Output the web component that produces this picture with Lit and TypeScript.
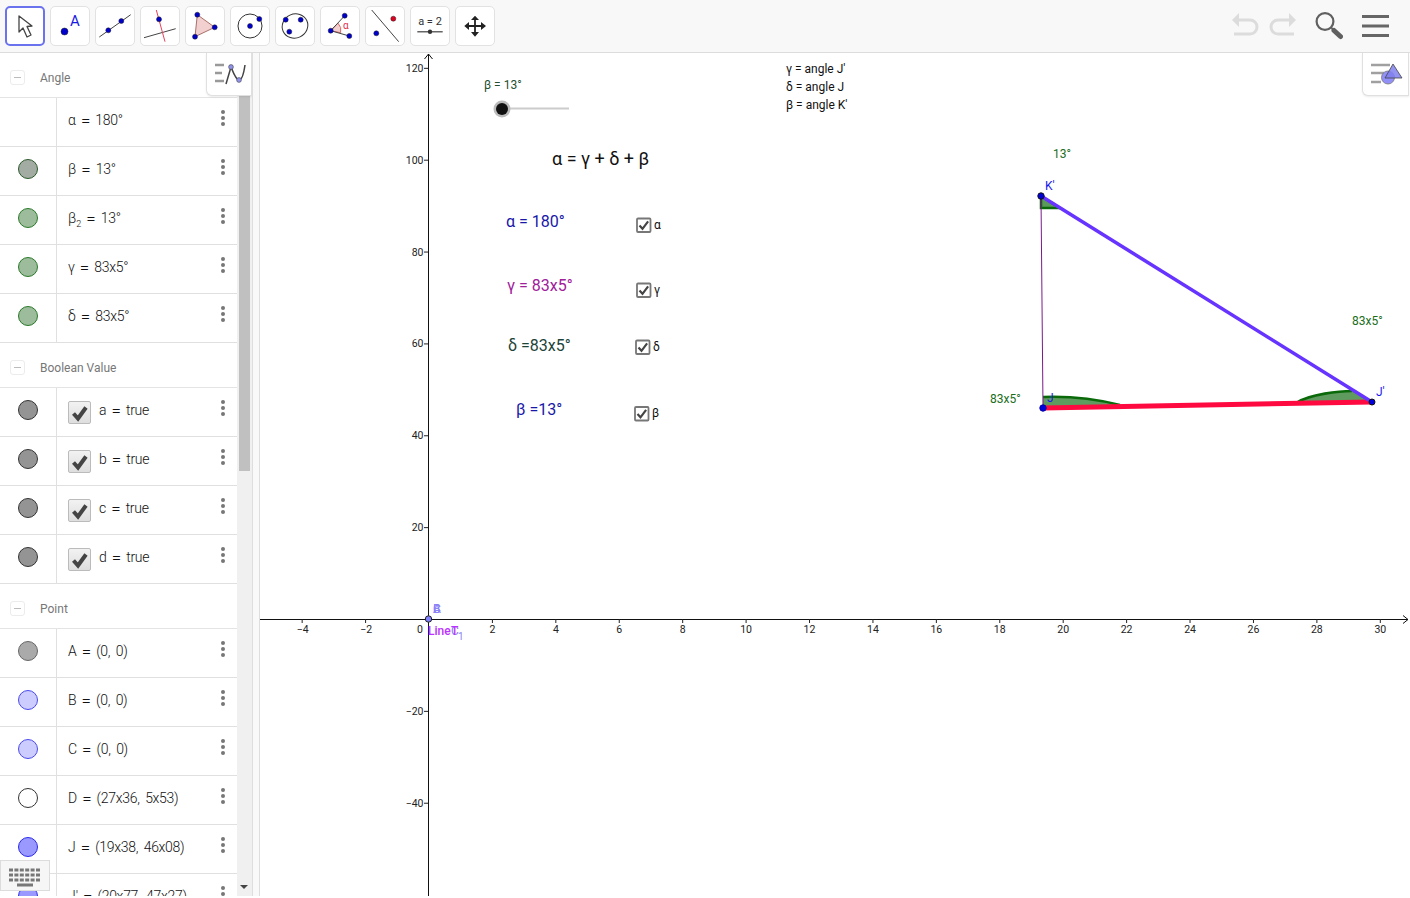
import { LitElement, html, css, svg } from "lit";
import { customElement } from "lit/decorators.js";

type Row = { name: unknown; value: string; marble?: string; check?: boolean };
type Group = { title: string; rows: Row[] };

const GROUPS: Group[] = [
  {
    title: "Angle",
    rows: [
      { name: "α", value: "180°" },
      { name: "β", value: "13°", marble: "m-olive" },
      { name: html`β<sub>2</sub>`, value: "13°", marble: "m-green" },
      { name: "γ", value: "83x5°", marble: "m-green" },
      { name: "δ", value: "83x5°", marble: "m-green" },
    ],
  },
  {
    title: "Boolean Value",
    rows: [
      { name: "a", value: "true", marble: "m-gray", check: true },
      { name: "b", value: "true", marble: "m-gray", check: true },
      { name: "c", value: "true", marble: "m-gray", check: true },
      { name: "d", value: "true", marble: "m-gray", check: true },
    ],
  },
  {
    title: "Point",
    rows: [
      { name: "A", value: "(0, 0)", marble: "m-silver" },
      { name: "B", value: "(0, 0)", marble: "m-pale" },
      { name: "C", value: "(0, 0)", marble: "m-pale" },
      { name: "D", value: "(27x36, 5x53)", marble: "m-white" },
      { name: "J", value: "(19x38, 46x08)", marble: "m-blue" },
      { name: "J'", value: "(20x77, 47x27)", marble: "m-blue" },
    ],
  },
];

const pt = (x: number, y: number, r = 2.5, c = "#0000cc") =>
  svg`<circle cx=${x} cy=${y} r=${r} fill=${c} stroke="#222" stroke-width="0.5"></circle>`;

const TOOL_ICONS = [
  svg`<path d="M14 10V26L18 22L22 31L26 29L22 20.5L27 20Z" fill="#fff" stroke="#444" stroke-width="1.3" stroke-linejoin="round"></path>`,
  svg`${pt(14.5, 25.5, 3.5)}<text class="ti-a" x="20" y="20">A</text>`,
  svg`<line x1="4.3" y1="31" x2="35.7" y2="8.7" stroke="#444"></line>${pt(13.3, 24.3)}${pt(26.3, 15)}`,
  svg`<line x1="4" y1="31.7" x2="35.7" y2="22.7" stroke="#444"></line><line x1="16.3" y1="4" x2="25" y2="35.7" stroke="#e8405a"></line>${pt(19, 13.3)}`,
  svg`<path d="M12.3 8.7L29.7 21.3L10 30.7Z" fill="#f2d0d0" stroke="#a8706a" stroke-width="1"></path>${pt(12.3, 8.7)}${pt(29.7, 21.3)}${pt(10, 30.7)}`,
  svg`<circle cx="20" cy="20" r="12" fill="none" stroke="#333"></circle>${pt(20, 20)}${pt(29.3, 13)}`,
  svg`<ellipse cx="20" cy="20" rx="13" ry="12" transform="rotate(-25 20 20)" fill="none" stroke="#333"></ellipse>${pt(10.7, 13.7)}${pt(25.7, 13.7)}${pt(14.3, 25.7)}`,
  svg`<path d="M10.7 24.7L18 17.2A10 10 0 0 1 20.6 26.7Z" fill="#f2d0d0" stroke="#d66"></path><line x1="10.7" y1="24.7" x2="24.7" y2="9.7" stroke="#444"></line><line x1="10.7" y1="24.7" x2="29.3" y2="30" stroke="#444"></line>${pt(10.7, 24.7)}${pt(24.7, 9.7)}${pt(29.3, 30)}<text class="ti-alpha" x="23" y="23">α</text>`,
  svg`<line x1="6.7" y1="4" x2="33.7" y2="35.7" stroke="#444"></line>${pt(28.3, 12.7, 2.5, "#e00020")}${pt(11.3, 27.3)}`,
  svg`<text class="ti-eq" x="20" y="19" text-anchor="middle">a = 2</text><line x1="7.3" y1="25.7" x2="32.7" y2="25.7" stroke="#666" stroke-width="1.4"></line><circle cx="20" cy="25.7" r="2.2" fill="#333"></circle>`,
  svg`<path d="M20 12V28M12 20H28" stroke="#222" stroke-width="1.8"></path><path d="M20 9.7L16 14H24ZM20 30.7L16 26H24ZM9.3 20L14 16V24ZM31 20L26 16V24Z" fill="#222"></path>`,
];

const CHECK_PATH = "M3 7.5L6 10.8L11.6 3.4";

@customElement("app-root")
export class AppRoot extends LitElement {
  static styles = css`
    :host {
      display: block;
      width: 1410px;
      height: 896px;
      overflow: hidden;
      background: #fff;
      font-family: Roboto, "Liberation Sans", sans-serif;
      color: #222;
    }
    .toolbar {
      display: flex;
      align-items: center;
      box-sizing: border-box;
      height: 53px;
      padding: 0 20px 1px 5px;
      gap: 5px;
      background: #f8f8f8;
      border-bottom: 1px solid #dcdcdc;
    }
    .tool {
      box-sizing: border-box;
      width: 40px;
      height: 40px;
      background: #fff;
      border: 1px solid #e2e2e2;
      border-radius: 5px;
      overflow: hidden;
    }
    .tool.active {
      border: 2px solid #6a72ee;
    }
    .tool svg {
      display: block;
      width: 40px;
      height: 40px;
      margin: -1px;
    }
    .tool.active svg {
      margin: -2px;
    }
    .ti-a {
      font: 15px Roboto, sans-serif;
      fill: #1a1ae0;
    }
    .ti-alpha {
      font: 10px Roboto, sans-serif;
      fill: #e0304a;
    }
    .ti-eq {
      font: 11px Roboto, sans-serif;
      fill: #333;
    }
    .right {
      margin-left: auto;
      display: flex;
      align-items: center;
    }
    .right svg {
      display: block;
    }
    .undo {
      margin-right: 8px;
    }
    .redo {
      margin-right: 19px;
    }
    .search {
      margin-right: 19px;
    }
    .main {
      display: grid;
      grid-template-columns: 252px 8px 1150px;
      height: 843px;
    }
    .side {
      position: relative;
      display: grid;
      grid-template-columns: 237px 15px;
      height: 843px;
      overflow: hidden;
    }
    .list {
      overflow: hidden;
    }
    .ghead {
      box-sizing: border-box;
      height: 45px;
      display: flex;
      align-items: center;
      padding: 5px 0 0 10px;
      gap: 15px;
      font-size: 12px;
      color: #777;
      border-bottom: 1px solid #e4e4e4;
    }
    .collapse {
      box-sizing: border-box;
      width: 15px;
      height: 15px;
      border: 1px solid #ececec;
      border-radius: 3px;
      display: flex;
      align-items: center;
      justify-content: center;
    }
    .collapse i {
      display: block;
      width: 7px;
      height: 1px;
      background: #bbb;
    }
    .row {
      box-sizing: border-box;
      height: 49px;
      display: grid;
      grid-template-columns: 57px 1fr 29px;
      border-bottom: 1px solid #e0e0e0;
    }
    .mcell {
      border-right: 1px solid #e0e0e0;
      display: flex;
      align-items: center;
      justify-content: center;
      padding-bottom: 4px;
    }
    .marble {
      box-sizing: border-box;
      width: 20px;
      height: 20px;
      border-radius: 50%;
      border: 1px solid #333;
    }
    .m-olive { background: #a3aca3; border-color: #2c5a2c; }
    .m-green { background: #9cbc9c; border-color: #2a7a2a; }
    .m-gray { background: #949494; border-color: #333; }
    .m-silver { background: #aaa; border-color: #666; }
    .m-pale { background: #ccccff; border-color: #4a4aee; }
    .m-white { background: #fff; border-color: #333; }
    .m-blue { background: #9999ff; border-color: #2a2aee; }
    .content {
      display: flex;
      align-items: center;
      padding: 0 0 4px 11px;
      font-size: 14px;
      font-weight: 300;
      color: #111;
      white-space: nowrap;
    }
    .content sub {
      font-size: 9px;
      line-height: 0;
    }
    .eq {
      font-size: 17px;
      line-height: 1;
      margin: 0 5px;
    }
    .val {
      letter-spacing: -0.3px;
      word-spacing: 2.5px;
    }
    .cb {
      box-sizing: border-box;
      width: 23px;
      height: 23px;
      margin: 4px 8px 0 0;
      flex: none;
      border: 1px solid #bbb;
      border-radius: 2px;
      background: linear-gradient(#f2f2f2, #dedede);
    }
    .cb svg {
      display: block;
    }
    .dots {
      display: flex;
      flex-direction: column;
      align-items: center;
      justify-content: center;
      gap: 2.4px;
      padding-bottom: 8px;
      width: 0;
      justify-self: center;
    }
    .dots i {
      display: block;
      flex: none;
      width: 4px;
      height: 4px;
      border-radius: 50%;
      background: #777;
    }
    .track {
      position: relative;
      background: #f0f0f0;
    }
    .thumb {
      margin-left: 2px;
      width: 11px;
      height: 418px;
      background: #c0c0c0;
    }
    .down {
      position: absolute;
      left: 3px;
      bottom: 7px;
      width: 0;
      height: 0;
      border-left: 4px solid transparent;
      border-right: 4px solid transparent;
      border-top: 4px solid #444;
    }
    .stylebtn {
      position: absolute;
      top: 0;
      right: 0;
      box-sizing: border-box;
      width: 46px;
      height: 43px;
      background: #fff;
      border: 1px solid #e0e0e0;
      border-top: none;
      border-bottom-left-radius: 6px;
      box-shadow: 0 1px 2px rgba(0, 0, 0, 0.08);
    }
    .stylebtn svg {
      display: block;
    }
    .stylebtn.canvas {
      right: 1px;
      width: 47px;
    }
    .kbd {
      position: absolute;
      left: 0;
      top: 807px;
      box-sizing: border-box;
      width: 50px;
      height: 31px;
      background: #f6f6f6;
      border: 1px solid #dcdcdc;
    }
    .kbd svg {
      display: block;
    }
    .split {
      border-left: 1px solid #dedede;
      border-right: 1px solid #dedede;
      background: #f9f9f9;
    }
    .canvas-wrap {
      position: relative;
      overflow: hidden;
    }
    .canvas-wrap > svg {
      display: block;
    }
    .tick {
      font: 10.5px Roboto, sans-serif;
      fill: #222;
    }
    .t12 {
      font: 12px Roboto, sans-serif;
      fill: #111;
    }
    .t-slider {
      font: 12px Roboto, sans-serif;
      fill: #24502f;
    }
    .t-title {
      font: 18px Roboto, sans-serif;
      fill: #111;
    }
    .t16 {
      font: 16px Roboto, sans-serif;
    }
    .navy { fill: #1818a8; }
    .plum { fill: #a0209a; }
    .teal { fill: #1c4438; }
    .t-green {
      font: 12px Roboto, sans-serif;
      fill: #1a6e1a;
    }
    .t-blue {
      font: 12px Roboto, sans-serif;
      fill: #1a1af0;
    }
    .t-point {
      font: 12px Roboto, sans-serif;
      fill: #8a80f8;
    }
    .t-sub {
      font: 10px Roboto, sans-serif;
      fill: #8a80f8;
    }
    .t-line {
      font: 500 12px Roboto, sans-serif;
      fill: #bb33ff;
    }
  `;

  private renderRow(r: Row) {
    return html`<div class="row">
      <div class="mcell">${r.marble ? html`<div class="marble ${r.marble}"></div>` : ""}</div>
      <div class="content">
        ${r.check
          ? html`<div class="cb">
              <svg width="21" height="21" viewBox="0 0 21 21">
                <path d="M4.5 11.5L9 16.5L17 5.5" fill="none" stroke="#444" stroke-width="4"></path>
              </svg>
            </div>`
          : ""}<span>${r.name}</span><span class="eq">=</span><span class="val">${r.value}</span>
      </div>
      <div class="dots"><i></i><i></i><i></i></div>
    </div>`;
  }

  private axes() {
    const xs: number[] = [];
    for (let v = -4; v <= 30; v += 2) if (v !== 0) xs.push(v);
    const ys = [120, 100, 80, 60, 40, 20, -20, -40];
    const fmt = (v: number) => (v < 0 ? `−${-v}` : `${v}`);
    return svg`
      <line x1="260" y1="619.5" x2="1408" y2="619.5" stroke="#111"></line>
      <path d="M1403 615.5L1408 619.5L1403 623.5" fill="none" stroke="#111"></path>
      <line x1="428.5" y1="54" x2="428.5" y2="896" stroke="#111"></line>
      <path d="M424.5 59L428.5 54L432.5 59" fill="none" stroke="#111"></path>
      ${xs.map((v) => {
        const x = 429 + v * 31.71;
        const lx = v < 0 ? x + 0.5 : x;
        return svg`<line x1=${x} y1="619" x2=${x} y2="623" stroke="#222"></line>
          <text class="tick" x=${lx} y="633" text-anchor="middle">${fmt(v)}</text>`;
      })}
      ${ys.map((v) => {
        const y = 619.5 - v * 4.593;
        return svg`<line x1="424" y1=${y} x2="428" y2=${y} stroke="#222"></line>
          <text class="tick" x="423.5" y=${y + 3.5} text-anchor="end">${fmt(v)}</text>`;
      })}
      <text class="tick" x="417" y="633">0</text>`;
  }

  private checkbox(x: number, y: number, label: string, lx: number, ly: number) {
    return svg`<g transform="translate(${x} ${y})">
        <rect x="0.5" y="0.5" width="13.5" height="13.5" rx="1" fill="#fff" stroke="#777" stroke-width="1.8"></rect>
        <path d=${CHECK_PATH} fill="none" stroke="#444" stroke-width="2.2"></path>
      </g>
      <text class="t12" x=${lx} y=${ly}>${label}</text>`;
  }

  private drawing() {
    return svg`
      <text class="t-slider" x="484" y="89">β = 13°</text>
      <line x1="502" y1="108.5" x2="569" y2="108.5" stroke="#ccc" stroke-width="2"></line>
      <circle cx="502" cy="109" r="8.5" fill="#bcbcbc"></circle>
      <circle cx="502" cy="109" r="6" fill="#111"></circle>

      <text class="t12" x="786" y="73">γ = angle J'</text>
      <text class="t12" x="786" y="91">δ = angle J</text>
      <text class="t12" x="786" y="109">β = angle K'</text>

      <text class="t-title" x="552" y="165">α = γ + δ + β</text>
      <text class="t16 navy" x="506" y="227">α = 180°</text>
      <text class="t16 plum" x="507" y="291">γ = 83x5°</text>
      <text class="t16 teal" x="508" y="351">δ =83x5°</text>
      <text class="t16 navy" x="516" y="415">β =13°</text>

      ${this.checkbox(636.5, 218, "α", 654, 229)}
      ${this.checkbox(636.5, 283, "γ", 654, 294)}
      ${this.checkbox(635.5, 340, "δ", 653, 351)}
      ${this.checkbox(634.5, 406.5, "β", 652, 417)}

      <path d="M1041 196L1041 208L1060 208Z" fill="#5a9a5a" stroke="#0a6a0a" stroke-width="2.5"></path>
      <path d="M1043 407L1043 397C1070 396 1100 400 1120 405Z" fill="#5f9a5f" stroke="none"></path>
      <path d="M1043 397C1070 396 1100 400 1120 405" fill="none" stroke="#0a6a0a" stroke-width="2.4"></path>
      <path d="M1296 403C1310 394 1340 391 1352 391L1372 402Z" fill="#5f9a5f"></path>
      <path d="M1296 403C1310 394 1340 391 1352 391" fill="none" stroke="#0a6a0a" stroke-width="2.6"></path>

      <line x1="1041" y1="196" x2="1043" y2="408" stroke="#7a1a8a" stroke-width="1"></line>
      <line x1="1043" y1="408" x2="1372" y2="402" stroke="#ff0a40" stroke-width="5"></line>
      <line x1="1041" y1="196" x2="1372" y2="402" stroke="#6633ff" stroke-width="3.5"></line>
      <circle cx="1041" cy="196" r="3.2" fill="#0000dd" stroke="#111"></circle>
      <circle cx="1043" cy="408" r="3.2" fill="#0000dd" stroke="#0000aa"></circle>
      <circle cx="1372" cy="402" r="3" fill="#0000dd" stroke="#111"></circle>

      <text class="t-green" x="1053" y="158">13°</text>
      <text class="t-green" x="990" y="403">83x5°</text>
      <text class="t-green" x="1352" y="325">83x5°</text>
      <text class="t-blue" x="1045" y="190">K'</text>
      <text class="t-blue" x="1047" y="402">J</text>
      <text class="t-blue" x="1376" y="396">J'</text>

      <circle cx="428.5" cy="619" r="3.2" fill="#8080ff" stroke="#222"></circle>
      <text class="t-point" x="433" y="613">A</text>
      <text class="t-point" x="433" y="613">B</text>
      <text class="t-point" x="433" y="613">C</text>
      <text class="t-line" x="428" y="635">Line</text>
      <text class="t-point" x="451" y="635">C</text>
      <text class="t-line" x="451" y="635">T</text>
      <text class="t-sub" x="458" y="640">1</text>`;
  }

  render() {
    return html`
      <div class="toolbar">
        ${TOOL_ICONS.map(
          (ic, i) => html`<div class="tool ${i === 0 ? "active" : ""}">
            <svg viewBox="0 0 40 40">${ic}</svg>
          </div>`
        )}
        <div class="right">
          <svg class="undo" width="28" height="26" viewBox="0 0 28 26">
            <path d="M0 7L7 0V14Z" fill="#dcdcdc"></path>
            <path d="M5 7H18A7 7 0 0 1 18 21H2" fill="none" stroke="#dcdcdc" stroke-width="3"></path>
          </svg>
          <svg class="redo" width="28" height="26" viewBox="0 0 28 26">
            <path d="M28 7L21 0V14Z" fill="#dcdcdc"></path>
            <path d="M23 7H10A7 7 0 0 0 10 21H26" fill="none" stroke="#dcdcdc" stroke-width="3"></path>
          </svg>
          <svg class="search" width="28" height="30" viewBox="0 0 28 30">
            <circle cx="10" cy="10.5" r="8.4" fill="none" stroke="#606060" stroke-width="2.2"></circle>
            <line x1="16.5" y1="17" x2="18.5" y2="19" stroke="#606060" stroke-width="2"></line>
            <line x1="19" y1="19.5" x2="25.5" y2="25.5" stroke="#606060" stroke-width="5" stroke-linecap="round"></line>
          </svg>
          <svg width="28" height="26" viewBox="0 0 28 26">
            <path d="M0 3.5H27M0 13H27M0 22.5H27" stroke="#666" stroke-width="3"></path>
          </svg>
        </div>
      </div>
      <div class="main">
        <div class="side">
          <div class="list">
            ${GROUPS.map(
              (g) => html`<div class="ghead">
                  <div class="collapse"><i></i></div>
                  <span>${g.title}</span>
                </div>
                ${g.rows.map((r) => this.renderRow(r))}`
            )}
          </div>
          <div class="track">
            <div class="thumb"></div>
            <div class="down"></div>
          </div>
          <div class="stylebtn">
            <svg width="45" height="42" viewBox="207 53 45 42">
              <path d="M215 65H224M215 73H222M215 81H224" stroke="#999" stroke-width="2.4"></path>
              <path d="M226 84L231 67C233 72 236 80 239 80C242 80 244 72 245 65" fill="none" stroke="#444" stroke-width="1.5"></path>
              <circle cx="231" cy="67" r="2.4" fill="#9090ee" stroke="#444" stroke-width="0.6"></circle>
              <circle cx="239" cy="80" r="2.4" fill="#9090ee" stroke="#444" stroke-width="0.6"></circle>
            </svg>
          </div>
          <div class="kbd">
            <svg width="48" height="29" viewBox="1 861 48 29">
              <path d="M9 870H41M9 875H41M9 880H41" stroke="#777" stroke-width="3" stroke-dasharray="4 1.4"></path>
              <path d="M17 885H33" stroke="#777" stroke-width="3"></path>
            </svg>
          </div>
        </div>
        <div class="split"></div>
        <div class="canvas-wrap">
          <svg width="1150" height="843" viewBox="260 53 1150 843">
            ${this.axes()} ${this.drawing()}
          </svg>
          <div class="stylebtn canvas">
            <svg width="46" height="42" viewBox="1363 53 46 42">
              <path d="M1371 65H1390M1371 73H1384M1371 82H1381" stroke="#a0a0a0" stroke-width="2.4"></path>
              <circle cx="1388" cy="77.5" r="6.5" fill="#9090f8" stroke="#777" stroke-width="0.8"></circle>
              <path d="M1393 64L1402 78H1385Z" fill="#8080f0" fill-opacity="0.85" stroke="#444" stroke-width="0.8"></path>
            </svg>
          </div>
        </div>
      </div>
    `;
  }
}
